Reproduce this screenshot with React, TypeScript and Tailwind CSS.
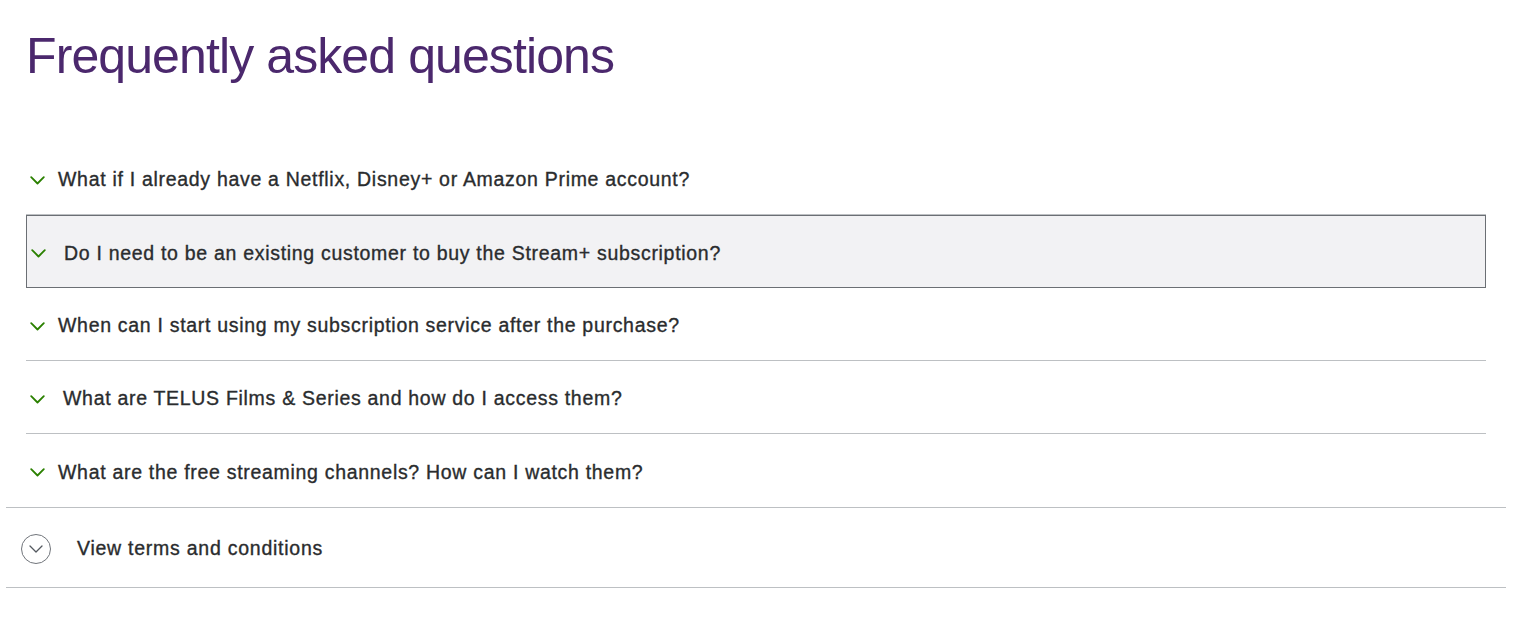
import React from "react";

const questions = [
  { text: "What if I already have a Netflix, Disney+ or Amazon Prime account?", indent: false, active: false },
  { text: "Do I need to be an existing customer to buy the Stream+ subscription?", indent: true, active: true },
  { text: "When can I start using my subscription service after the purchase?", indent: false, active: false },
  { text: "What are TELUS Films & Series and how do I access them?", indent: true, active: false },
  { text: "What are the free streaming channels? How can I watch them?", indent: false, active: false, last: true },
];

function Chevron() {
  return (
    <svg width="15" height="9" viewBox="0 0 15 9" fill="none" className="shrink-0">
      <path d="M1.2 1.2 L7.5 7.5 L13.8 1.2" stroke="#2b8000" strokeWidth="1.8" strokeLinecap="round" strokeLinejoin="round" />
    </svg>
  );
}

export default function App() {
  return (
    <div className="bg-white w-full min-h-[617px] pl-[6px] pr-[21px]" style={{ fontFamily: '"Liberation Sans", Arial, sans-serif' }}>
      <div className="px-[20px]">
        <h1 className="text-[50px] leading-[60px] pt-[26px] text-[#4b286d] font-normal tracking-[-0.9px] h-[142px]">
          Frequently asked questions
        </h1>
        <div className="flex flex-col">
          {questions.map((q, i) => (
            <div
              key={i}
              className={
                "flex items-center h-[73px] pl-[4px] pt-[4px] " +
                (q.active
                  ? "bg-[#f2f2f4] border border-[#6b6f74]"
                  : q.last
                  ? ""
                  : "border-b border-[#bdc0c3]")
              }
            >
              <Chevron />
              <span
                className={
                  "text-[19.5px] tracking-[0.7px] text-[#2a2c2e] [-webkit-text-stroke:0.35px_#2a2c2e] " +
                  (q.indent ? "ml-[18px]" : "ml-[13px]")
                }
              >
                {q.text}
              </span>
            </div>
          ))}
        </div>
      </div>
      <div className="flex items-center h-[81px] border-y border-[#bdc0c3] pl-[15px] pt-[2px]">
        <div className="w-[30px] h-[30px] rounded-full border border-[#71757b] flex items-center justify-center">
          <svg width="14" height="8" viewBox="0 0 14 8" fill="none">
            <path d="M1 1 L7 7 L13 1" stroke="#54595f" strokeWidth="1.3" strokeLinecap="round" strokeLinejoin="round" />
          </svg>
        </div>
        <span className="ml-[26px] text-[19.5px] tracking-[0.75px] text-[#2a2c2e] [-webkit-text-stroke:0.35px_#2a2c2e]">
          View terms and conditions
        </span>
      </div>
    </div>
  );
}
